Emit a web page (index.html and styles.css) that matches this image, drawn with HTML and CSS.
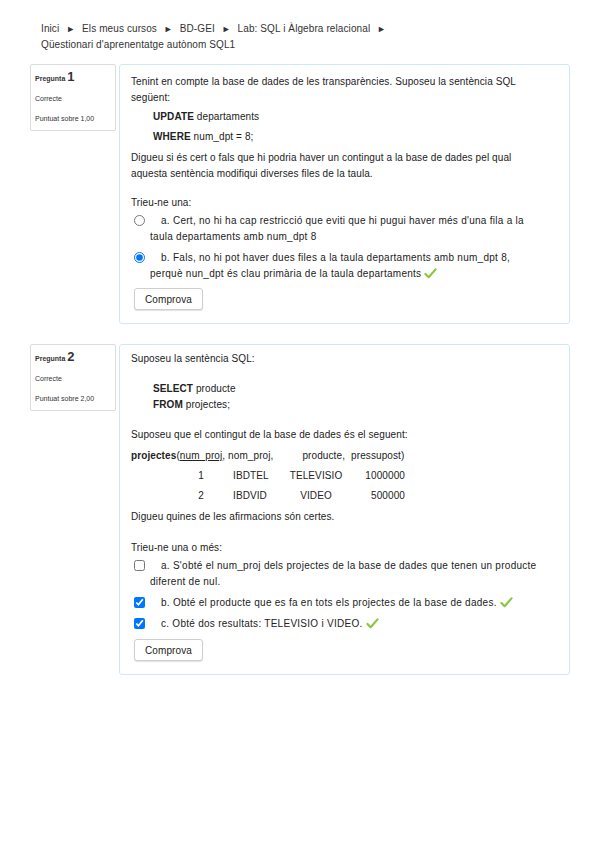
FILE: index.html
```html
<!DOCTYPE html>
<html lang="ca">
<head>
<meta charset="utf-8">
<title>Qüestionari d'aprenentatge autònom SQL1</title>
<link rel="stylesheet" href="styles.css">
</head>
<body>
<nav class="crumbs">
  <span>Inici</span> <span class="sep">►</span> <span>Els meus cursos</span> <span class="sep">►</span> <span>BD-GEI</span> <span class="sep">►</span> <span>Lab: SQL i Àlgebra relacional</span> <span class="sep">►</span><br>
  <span>Qüestionari d'aprenentatge autònom SQL1</span>
</nav>

<section class="que q1">
  <div class="info">
    <div class="qno"><span class="lbl">Pregunta</span> <span class="num">1</span></div>
    <div class="state">Correcte</div>
    <div class="grade">Puntuat sobre 1,00</div>
  </div>
  <div class="content">
    <p class="p-intro">Tenint en compte la base de dades de les transparències. Suposeu la sentència SQL següent:</p>
    <p class="code c1"><b>UPDATE</b> departaments</p>
    <p class="code c2"><b>WHERE</b> num_dpt = 8;</p>
    <p class="p-ask">Digueu si és cert o fals que hi podria haver un contingut a la base de dades pel qual aquesta sentència modifiqui diverses files de la taula.</p>
    <p class="prompt">Trieu-ne una:</p>
    <div class="answers">
      <label class="ans"><input type="radio" name="q1" class="ctl">a. Cert, no hi ha cap restricció que eviti que hi pugui haver més d'una fila a la taula departaments amb num_dpt 8</label>
      <label class="ans"><input type="radio" name="q1" class="ctl" checked>b. Fals, no hi pot haver dues files a la taula departaments amb num_dpt 8, perquè nun_dpt és clau primària de la taula departaments <svg class="tick" viewBox="0 0 14 12" width="13" height="11"><path d="M1.5 6.5 L5 10 L12.5 1.5" fill="none" stroke="#8cc63f" stroke-width="2.4" stroke-linecap="round" stroke-linejoin="round"/></svg></label>
    </div>
    <button class="btn b1">Comprova</button>
  </div>
</section>

<section class="que q2">
  <div class="info">
    <div class="qno"><span class="lbl">Pregunta</span> <span class="num">2</span></div>
    <div class="state">Correcte</div>
    <div class="grade">Puntuat sobre 2,00</div>
  </div>
  <div class="content">
    <p class="p-intro2">Suposeu la sentència SQL:</p>
    <p class="code sel"><b>SELECT</b> producte<br><b>FROM</b> projectes;</p>
    <p class="p-db">Suposeu que el contingut de la base de dades és el seguent:</p>
    <p class="schema"><b>projectes</b>(<u>num_proj</u>, nom_proj,<span class="gap1"></span>producte,<span class="gap2"></span>pressupost)</p>
    <div class="rows">
      <span class="c-n">1</span><span class="c-a">IBDTEL</span><span class="c-b">TELEVISIO</span><span class="c-c">1000000</span>
      <span class="c-n">2</span><span class="c-a">IBDVID</span><span class="c-b">VIDEO</span><span class="c-c">500000</span>
    </div>
    <p class="p-ask2">Digueu quines de les afirmacions són certes.</p>
    <p class="prompt2">Trieu-ne una o més:</p>
    <div class="answers">
      <label class="ans"><input type="checkbox" class="ctl">a. S'obté el num_proj dels projectes de la base de dades que tenen un producte diferent de nul.</label>
      <label class="ans"><input type="checkbox" class="ctl" checked>b. Obté el producte que es fa en tots els projectes de la base de dades. <svg class="tick" viewBox="0 0 14 12" width="13" height="11"><path d="M1.5 6.5 L5 10 L12.5 1.5" fill="none" stroke="#8cc63f" stroke-width="2.4" stroke-linecap="round" stroke-linejoin="round"/></svg></label>
      <label class="ans"><input type="checkbox" class="ctl" checked>c. Obté dos resultats: TELEVISIO i VIDEO. <svg class="tick" viewBox="0 0 14 12" width="13" height="11"><path d="M1.5 6.5 L5 10 L12.5 1.5" fill="none" stroke="#8cc63f" stroke-width="2.4" stroke-linecap="round" stroke-linejoin="round"/></svg></label>
    </div>
    <button class="btn b2">Comprova</button>
  </div>
</section>
</body>
</html>
```
FILE: styles.css
```css
html, body {
  margin: 0;
  padding: 0;
  background: #fff;
}
body {
  font-family: "Liberation Sans", Arial, sans-serif;
  font-size: 10px;
  color: #222;
  line-height: 16px;
  letter-spacing: 0.1px;
}
.crumbs {
  padding: 21px 0 0 41px;
  line-height: 16px;
  color: #333;
}
.crumbs .sep {
  font-size: 9px;
  margin: 0 4px;
}
.que {
  display: flex;
  align-items: flex-start;
  gap: 3px;
  margin-left: 30px;
}
.q1 { margin-top: 11px; }
.q2 { margin-top: 20px; }
.info {
  border: 1px solid #dcdcdc;
  border-radius: 2px;
  padding: 7px 0 6px 4px;
  box-sizing: border-box;
  width: 86px;
  font-size: 7px;
  color: #333;
  line-height: 10px;
  letter-spacing: 0;
}
.qno { height: 14px; }
.qno .lbl { font-weight: bold; font-size: 7px; }
.qno .num { font-weight: bold; font-size: 13px; }
.state { margin-top: 8px; }
.grade { margin-top: 10px; }
.content {
  width: 451px;
  box-sizing: border-box;
  border: 1px solid #cfe8f3;
  border-radius: 3px;
  padding: 9px 28px 13px 11px;
}
.content p { margin: 0; }
.code { padding-left: 22px; }
.c1 { margin-top: 3px !important; }
.c2 { margin-top: 4px !important; }
.p-ask { margin-top: 5px !important; }
.prompt { margin-top: 13px !important; }
.prompt2 { margin-top: 15px !important; }
.answers { margin-top: 2px; }
.ans {
  display: block;
  padding-left: 19px;
  text-indent: -16px;
  margin-bottom: 5px;
  letter-spacing: 0.27px;
}
.ans:last-child { margin-bottom: 0; }
.ctl {
  margin: 0 16px 0 0;
  width: 11px;
  height: 11px;
  vertical-align: -2px;
}
.tick { vertical-align: -2px; }
.btn {
  display: block;
  margin: 8px 0 0 3px;
  font-family: "Liberation Sans", Arial, sans-serif;
  font-size: 10px;
  letter-spacing: 0.1px;
  color: #222;
  background: #fff;
  border: 1px solid #cfcfcf;
  border-radius: 3px;
  box-shadow: 0 1px 1px rgba(0,0,0,0.12);
  width: 69px;
  height: 22px;
  padding: 0;
}
.b1 { margin-top: 6px; }
.b2 { margin-top: 7px; }
.q2 .content { padding-top: 6px; }
.sel { margin-top: 14px !important; }
.p-db { margin-top: 14px !important; }
.schema { margin-top: 5px !important; }
.gap1 { display: inline-block; width: 29px; }
.gap2 { display: inline-block; width: 6px; }
.rows {
  display: grid;
  grid-template-columns: 22px 71px 66px 56px;
  row-gap: 4px;
  margin: 4px 0 0 59px;
}
.c-n { text-align: center; }
.c-a { padding-left: 21px; }
.c-b { text-align: center; }
.c-c { text-align: right; }
.p-ask2 { margin-top: 5px !important; }
```
